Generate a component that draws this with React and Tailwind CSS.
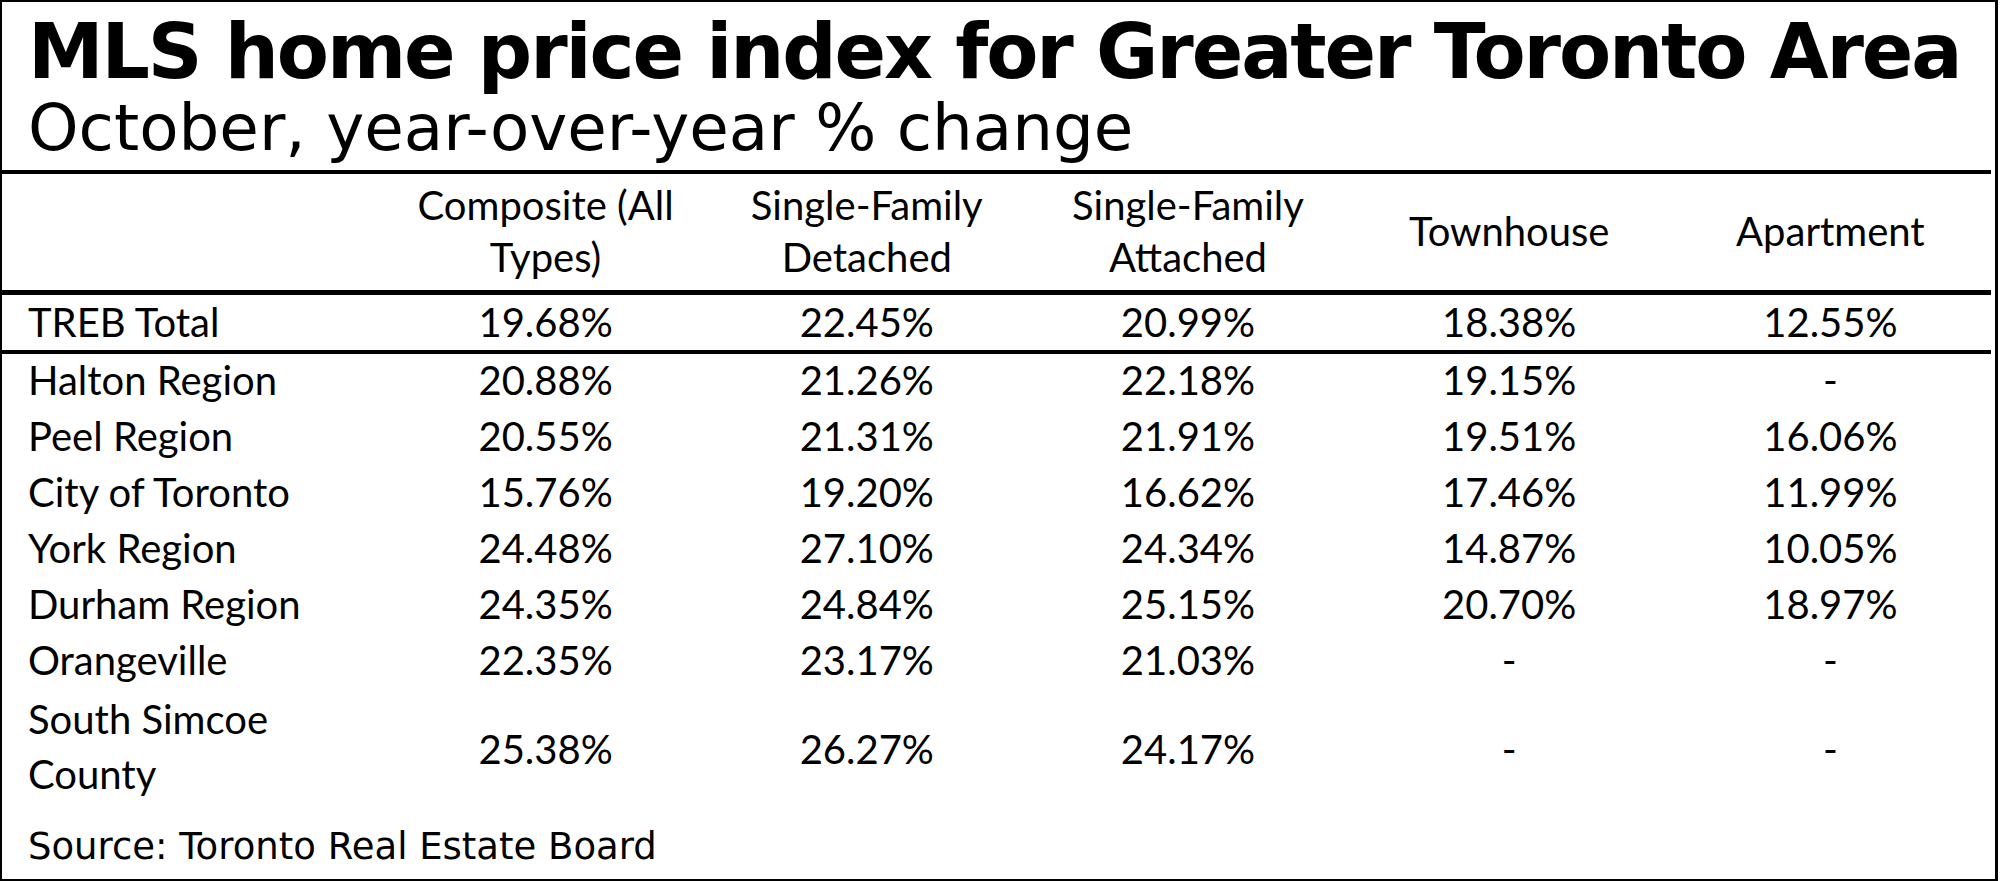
import React from "react";

const headers = [
  ["Composite (All", "Types)"],
  ["Single-Family", "Detached"],
  ["Single-Family", "Attached"],
  ["Townhouse"],
  ["Apartment"],
];

const rows = [
  ["Halton Region", ["20.88%", "21.26%", "22.18%", "19.15%", "-"]],
  ["Peel Region", ["20.55%", "21.31%", "21.91%", "19.51%", "16.06%"]],
  ["City of Toronto", ["15.76%", "19.20%", "16.62%", "17.46%", "11.99%"]],
  ["York Region", ["24.48%", "27.10%", "24.34%", "14.87%", "10.05%"]],
  ["Durham Region", ["24.35%", "24.84%", "25.15%", "20.70%", "18.97%"]],
  ["Orangeville", ["22.35%", "23.17%", "21.03%", "-", "-"]],
];

function RuleDown() {
  return (
    <div className="grid grid-cols-[383px_repeat(5,minmax(0,1fr))] h-[2px] mr-[4px]">
      <div className="bg-black h-full" />
      {[0, 1, 2, 3, 4].map((i) => (
        <div key={i} className="flex items-start h-full">
          <div className="w-[2px] h-[4px] bg-black shrink-0" />
          <div className="flex-1 h-full bg-black" />
        </div>
      ))}
    </div>
  );
}

function RuleUpThick() {
  return (
    <div className="grid grid-cols-[383px_repeat(5,minmax(0,1fr))] h-[3px] mr-[4px]">
      <div className="bg-black h-full" />
      {[0, 1, 2, 3, 4].map((i) => (
        <div key={i} className="flex items-end h-full">
          <div className="w-[2px] h-[5px] bg-black shrink-0" />
          <div className="flex-1 h-full bg-black" />
        </div>
      ))}
    </div>
  );
}

export default function App() {
  return (
    <div className="w-[2000px] h-[881px] bg-white overflow-hidden">
      <div className="w-[1998px] h-[881px] border-t-2 border-l-2 border-b-2 border-r-[3px] border-black flex flex-col text-black">
        <div className="pt-[12px] pl-[26px] font-['DejaVu_Sans',sans-serif] font-bold text-[76px] leading-[75px] tracking-[-2.1px] whitespace-nowrap">
          MLS home price index for Greater Toronto Area
        </div>
        <div className="mt-[8px] pl-[26px] font-['DejaVu_Sans',sans-serif] text-[64.3px] leading-[62px] whitespace-nowrap">
          October, year-over-year % change
        </div>
        <div className="mt-[11px]">
          <RuleDown />
        </div>
        <div className="font-['Lato',sans-serif] text-[40px]">
          <div className="grid grid-cols-[383px_repeat(5,minmax(0,1fr))] h-[118px] items-center mr-[4px] leading-[52px]">
            <div />
            {headers.map((h, i) => (
              <div key={i} className="text-center">
                {h.map((l, j) => (
                  <div key={j}>{l}</div>
                ))}
              </div>
            ))}
          </div>
          <RuleUpThick />
          <div className="grid grid-cols-[383px_repeat(5,minmax(0,1fr))] h-[57px] items-center mr-[4px] leading-[56px]">
            <div className="pl-[26px]">TREB Total</div>
            {["19.68%", "22.45%", "20.99%", "18.38%", "12.55%"].map((v, i) => (
              <div key={i} className="text-center">{v}</div>
            ))}
          </div>
          <RuleDown />
          {rows.map(([label, vals]) => (
            <div key={label} className="grid grid-cols-[383px_repeat(5,minmax(0,1fr))] h-[56px] items-center mr-[4px] leading-[56px]">
              <div className="pl-[26px]">{label}</div>
              {vals.map((v, i) => (
                <div key={i} className="text-center">{v}</div>
              ))}
            </div>
          ))}
          <div className="grid grid-cols-[383px_repeat(5,minmax(0,1fr))] h-[114px] items-center mr-[4px] leading-[55px]">
            <div className="pl-[26px] pt-[4px]">
              <div>South Simcoe</div>
              <div>County</div>
            </div>
            {["25.38%", "26.27%", "24.17%", "-", "-"].map((v, i) => (
              <div key={i} className="text-center leading-[56px] pt-[7px]">{v}</div>
            ))}
          </div>
        </div>
        <div className="mt-[26px] pl-[26px] font-['DejaVu_Sans',sans-serif] text-[37px] leading-[37px] whitespace-nowrap">
          Source: Toronto Real Estate Board
        </div>
      </div>
    </div>
  );
}
